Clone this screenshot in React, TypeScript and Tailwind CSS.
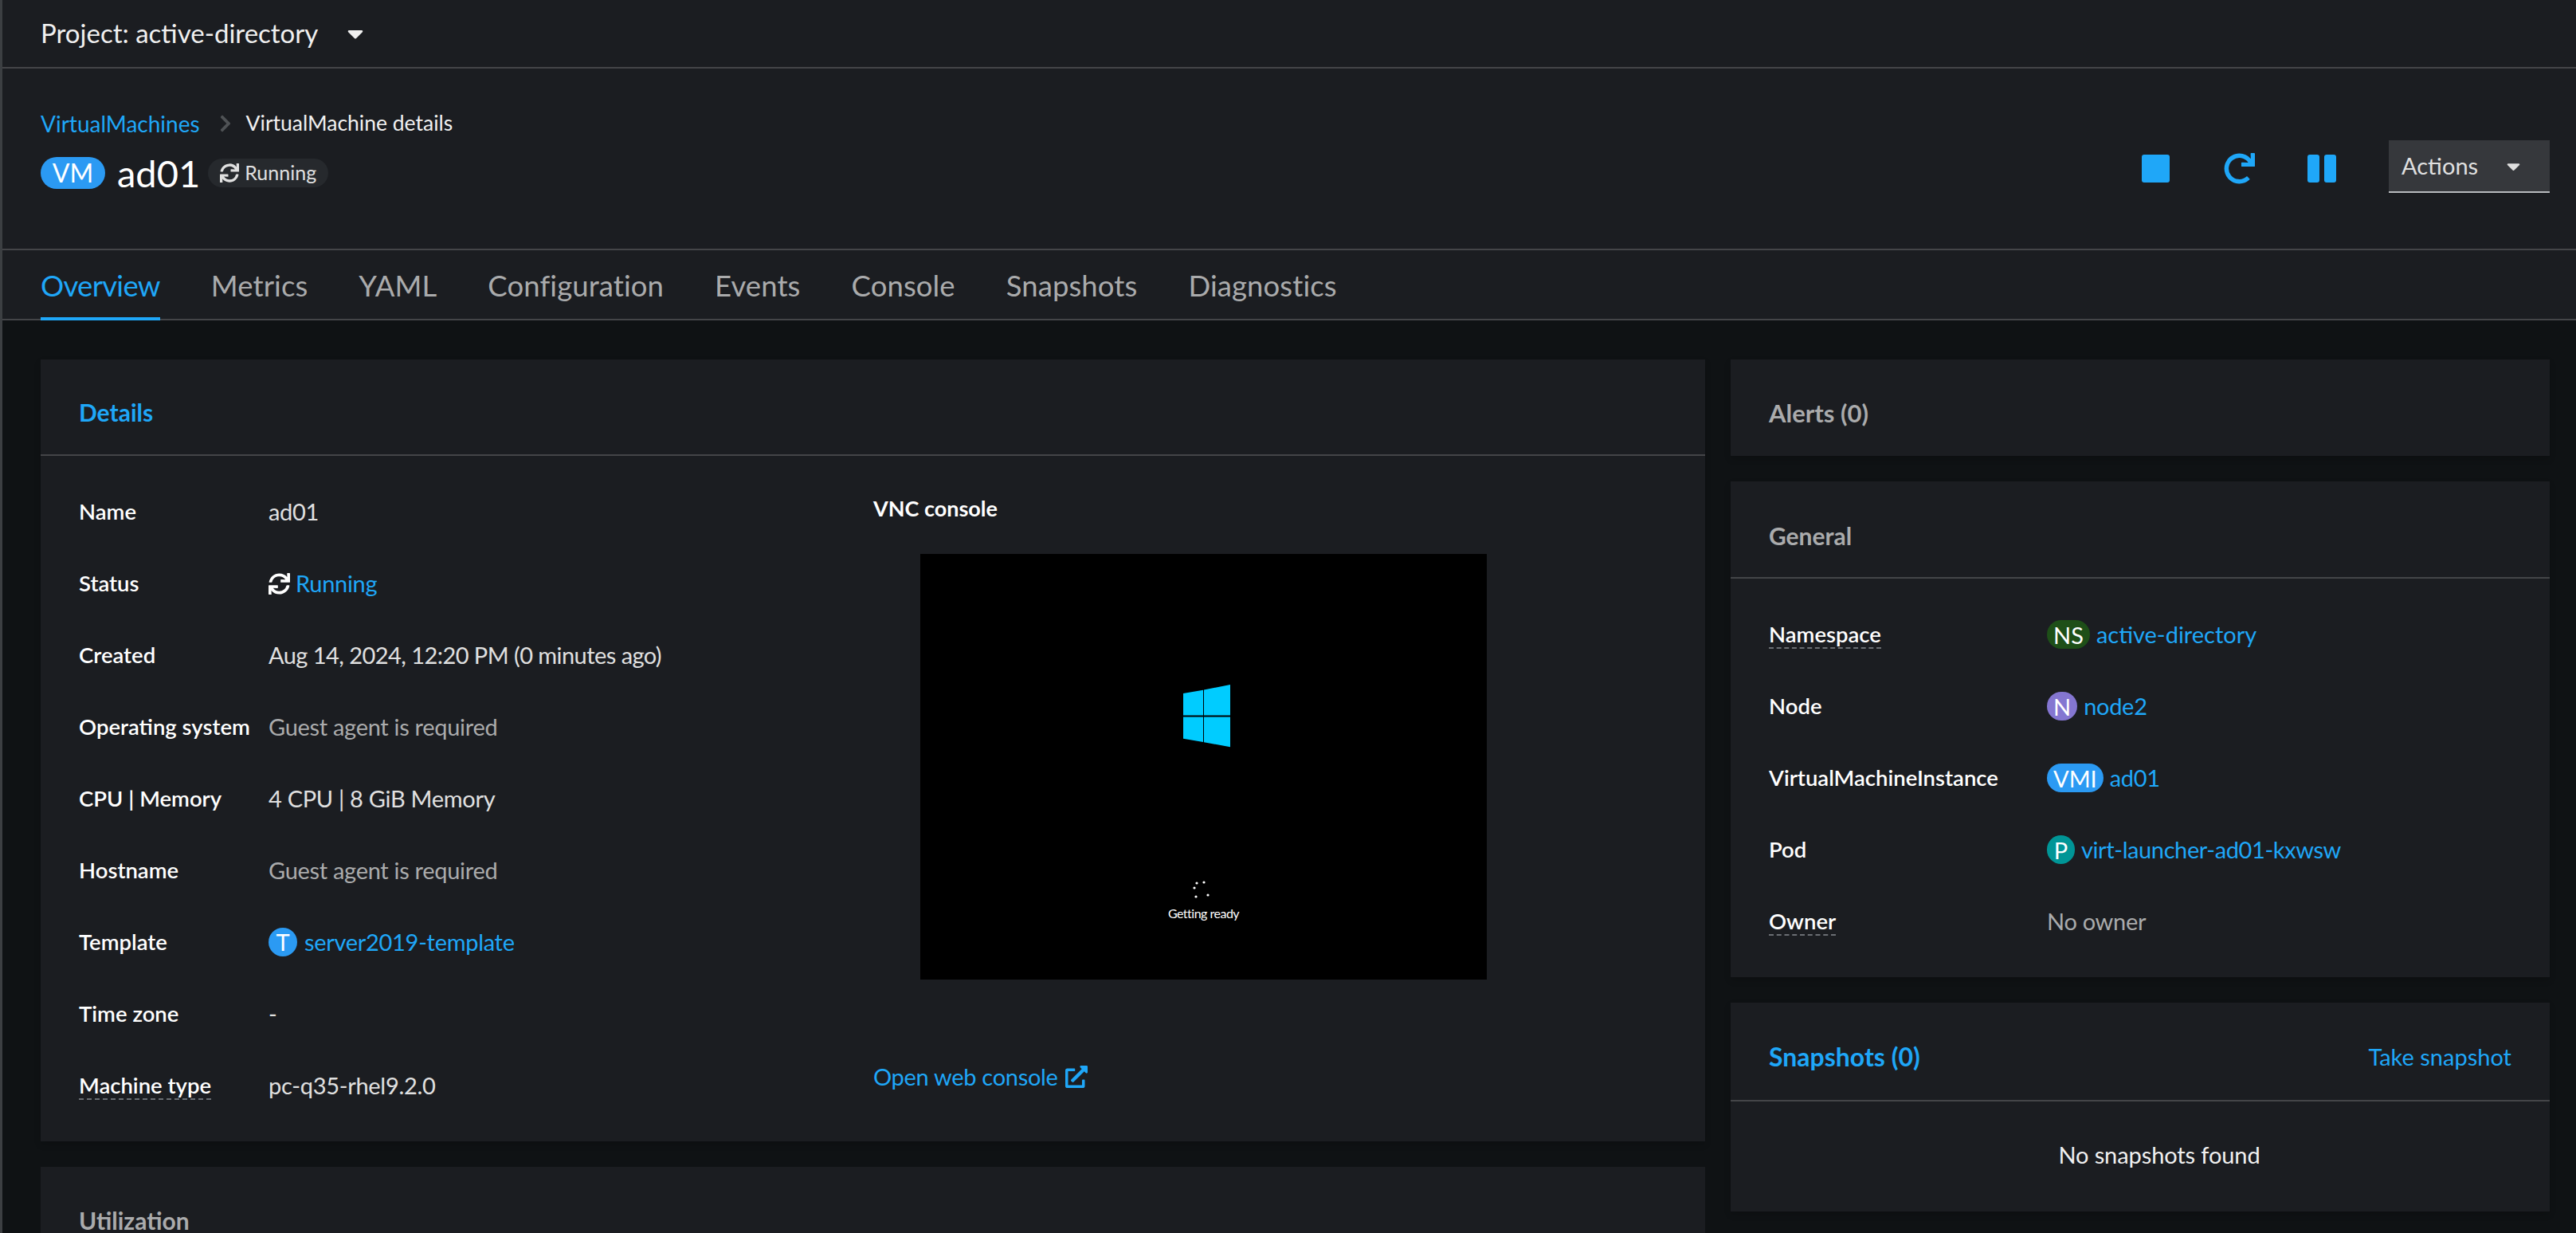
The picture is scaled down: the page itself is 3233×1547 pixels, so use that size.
import { FaSync, FaRedo, FaCaretDown, FaExternalLinkAlt, FaChevronRight } from "react-icons/fa";

const tabs = ["Overview", "Metrics", "YAML", "Configuration", "Events", "Console", "Snapshots", "Diagnostics"];

function Badge({ label, color }: { label: string; color: string }) {
  return (
    <span className={`${color} inline-flex h-[36px] items-center justify-center rounded-full px-[8px] text-[29px] leading-none tracking-normal text-white min-w-[35px]`}>
      {label}
    </span>
  );
}

function Label({ text, dashed }: { text: string; dashed?: boolean }) {
  return (
    <span className={`text-[27.5px] leading-[34px] font-semibold text-white ${dashed ? "border-b-2 border-dashed border-[#6a6e73]" : ""}`}>
      {text}
    </span>
  );
}

function DetailRow({ label, dashed, children }: { label: string; dashed?: boolean; children: React.ReactNode }) {
  return (
    <div className="flex h-[90px] items-center">
      <div className="w-[238px] shrink-0">
        <Label text={label} dashed={dashed} />
      </div>
      <div className="flex items-center text-[29px] tracking-[-0.3px] text-[#e0e0e0]">{children}</div>
    </div>
  );
}

function GeneralRow({ label, dashed, children }: { label: string; dashed?: boolean; children: React.ReactNode }) {
  return (
    <div className="flex h-[90px] items-center">
      <div className="w-[349px] shrink-0">
        <Label text={label} dashed={dashed} />
      </div>
      <div className="flex items-center gap-[8px] text-[29px] tracking-[-0.3px] text-[#1fa7f8]">{children}</div>
    </div>
  );
}

function WindowsLogo() {
  return (
    <svg width="59" height="79" viewBox="0 0 59 79" className="ml-[8px] fill-[#00ccff]">
      <polygon points="0,11 25,6.7 25,38.5 0,38.5" />
      <polygon points="26,6.5 59,0 59,38.5 26,38.5" />
      <polygon points="0,40.5 25,40.5 25,72 0,67.7" />
      <polygon points="26,40.5 59,40.5 59,78.3 26,72.2" />
    </svg>
  );
}

export default function App() {
  return (
    <div className="flex h-[1547px] w-[3233px] flex-col overflow-hidden border-l-[3px] border-[#3c3f42] bg-[#0f1214] font-['Lato',sans-serif] text-white">
      {/* project bar */}
      <div className="flex h-[86px] shrink-0 items-center border-b-2 border-[#444548] bg-[#1b1d21] pl-[48px]">
        <span className="text-[33px] text-[#f0f0f0]">Project: active-directory</span>
        <FaCaretDown className="ml-[31px] text-[#f0f0f0]" size={32} />
      </div>

      {/* header */}
      <div className="flex h-[228px] shrink-0 justify-between border-b-2 border-[#444548] bg-[#1b1d21] pl-[48px] pr-[33px]">
        <div className="pt-[51px]">
          <div className="flex h-[36px] items-center">
            <span className="text-[28px] text-[#1fa7f8]">VirtualMachines</span>
            <FaChevronRight className="ml-[20px] mr-[14px] text-[#4f5255]" size={24} />
            <span className="text-[26.5px] text-[#f0f0f0]">VirtualMachine details</span>
          </div>
          <div className="mt-[24px] flex items-center">
            <span className="flex h-[40px] w-[81px] items-center justify-center rounded-full bg-[#2b9af3] text-[32px] text-white">VM</span>
            <span className="ml-[15px] text-[47px] leading-[40px] text-white">ad01</span>
            <span className="ml-[10px] flex h-[36px] items-center gap-[7px] rounded-full bg-[#26292d] px-[15px] text-[25px] text-[#e0e0e0]">
              <FaSync size={24} />
              Running
            </span>
          </div>
        </div>
        <div className="flex items-start pt-[90px]">
          <span className="mt-[18px] h-[35px] w-[35px] rounded-[3px] bg-[#1fa7f8]" />
          <FaRedo className="ml-[68px] mt-[16px] text-[#1fa7f8]" size={39} />
          <span className="ml-[66px] mt-[18px] flex gap-[6px]">
            <span className="h-[35px] w-[15px] rounded-[3px] bg-[#1fa7f8]" />
            <span className="h-[35px] w-[15px] rounded-[3px] bg-[#1fa7f8]" />
          </span>
          <button className="ml-[66px] flex h-[66px] w-[202px] items-center justify-between border-b-2 border-[#b8bbbe] bg-[#36383c] pl-[16px] pr-[32px] text-[29px] text-[#e0e0e0]">
            Actions
            <FaCaretDown size={27} />
          </button>
        </div>
      </div>

      {/* tabs */}
      <div className="flex h-[88px] shrink-0 gap-[64px] border-b-2 border-[#444548] bg-[#1b1d21] pl-[48px]">
        {tabs.map((tab, i) => (
          <div
            key={tab}
            className={`-mb-[2px] flex items-center text-[36.5px] ${i === 0 ? "border-b-[4px] border-[#1fa7f8] pt-[4px] tracking-[-0.7px] text-[#1fa7f8]" : "tracking-[0.1px] text-[#aaabac]"}`}
          >
            {tab}
          </div>
        ))}
      </div>

      {/* content */}
      <div className="flex gap-[32px] pl-[48px] pt-[49px]">
        <div className="flex w-[2089px] shrink-0 flex-col gap-[32px]">
          <div className="h-[981px] bg-[#1b1d21] shadow-[0_4px_8px_rgba(3,3,3,0.16)]">
            <div className="flex h-[121px] items-center border-b-2 border-[#444548] pl-[48px] pt-[14px] text-[30px] font-bold text-[#1fa7f8]">Details</div>
            <div className="flex pl-[48px] pt-[25px]">
              <div className="w-[997px] shrink-0">
                <DetailRow label="Name">ad01</DetailRow>
                <DetailRow label="Status">
                  <FaSync className="mr-[7px] text-white" size={27} />
                  <span className="text-[#1fa7f8]">Running</span>
                </DetailRow>
                <DetailRow label="Created">
                  <span className="tracking-[-0.55px]">Aug 14, 2024, 12:20 PM (0 minutes ago)</span>
                </DetailRow>
                <DetailRow label="Operating system">
                  <span className="text-[#aaabac]">Guest agent is required</span>
                </DetailRow>
                <DetailRow label="CPU | Memory">4 CPU | 8 GiB Memory</DetailRow>
                <DetailRow label="Hostname">
                  <span className="text-[#aaabac]">Guest agent is required</span>
                </DetailRow>
                <DetailRow label="Template">
                  <span className="mr-[9px] flex h-[36px] w-[36px] items-center justify-center rounded-full bg-[#2b9af3] text-[29px] text-white">T</span>
                  <span className="text-[#1fa7f8]">server2019-template</span>
                </DetailRow>
                <DetailRow label="Time zone">-</DetailRow>
                <DetailRow label="Machine type" dashed>pc-q35-rhel9.2.0</DetailRow>
              </div>
              <div className="flex flex-col pt-[25px]">
                <div className="flex h-[32px] items-center text-[27px] font-bold text-white">VNC console</div>
                <div className="ml-[59px] mt-[41px] flex h-[534px] w-[711px] flex-col items-center bg-black pt-[164px]">
                  <WindowsLogo />
                  <svg width="24" height="24" viewBox="0 0 24 24" className="mt-[167px] -translate-x-[3px] fill-white">
                    <circle cx="6" cy="3" r="1.6" />
                    <circle cx="15" cy="2" r="1.6" />
                    <circle cx="3" cy="9" r="1.6" />
                    <circle cx="5" cy="20" r="1.6" />
                    <circle cx="20" cy="18" r="1.6" />
                  </svg>
                  <span className="mt-[5px] text-[16px] leading-[24px] tracking-[-0.5px] text-white">Getting ready</span>
                </div>
                <div className="mt-[100px] flex items-center text-[29px] tracking-[-0.3px] text-[#1fa7f8]">
                  Open web console
                  <FaExternalLinkAlt className="ml-[9px]" size={28} />
                </div>
              </div>
            </div>
          </div>
          <div className="h-[200px] bg-[#1b1d21] pl-[48px] pt-[54px] text-[30px] leading-[26px] font-bold text-[#aaabac]">Utilization</div>
        </div>

        <div className="flex w-[1028px] shrink-0 flex-col gap-[32px]">
          <div className="flex h-[121px] items-center bg-[#1b1d21] pl-[48px] pt-[14px] text-[31px] font-bold text-[#aaabac] shadow-[0_4px_8px_rgba(3,3,3,0.16)]">Alerts (0)</div>
          <div className="h-[622px] bg-[#1b1d21] shadow-[0_4px_8px_rgba(3,3,3,0.16)]">
            <div className="flex h-[122px] items-center border-b-2 border-[#444548] pl-[48px] pt-[16px] text-[30px] font-bold text-[#aaabac]">General</div>
            <div className="pl-[48px] pt-[25px]">
              <GeneralRow label="Namespace" dashed>
                <Badge label="NS" color="bg-[#1e4f18]" />
                <span className="tracking-normal">active-directory</span>
              </GeneralRow>
              <GeneralRow label="Node">
                <Badge label="N" color="bg-[#8476d1]" />
                node2
              </GeneralRow>
              <GeneralRow label="VirtualMachineInstance">
                <Badge label="VMI" color="bg-[#2b9af3]" />
                ad01
              </GeneralRow>
              <GeneralRow label="Pod">
                <Badge label="P" color="bg-[#009596]" />
                <span className="tracking-[-0.4px]">virt-launcher-ad01-kxwsw</span>
              </GeneralRow>
              <GeneralRow label="Owner" dashed>
                <span className="text-[#aaabac]">No owner</span>
              </GeneralRow>
            </div>
          </div>
          <div className="h-[262px] bg-[#1b1d21] shadow-[0_4px_8px_rgba(3,3,3,0.16)]">
            <div className="flex h-[124px] items-center justify-between border-b-2 border-[#444548] pl-[48px] pr-[48px] pt-[14px] text-[29px]">
              <span className="text-[32px] font-bold text-[#1fa7f8]">Snapshots (0)</span>
              <span className="text-[#1fa7f8]">Take snapshot</span>
            </div>
            <div className="flex h-[138px] items-center justify-center pb-[4px] pl-[48px] text-[29px] tracking-[-0.1px] text-[#f0f0f0]">No snapshots found</div>
          </div>
        </div>
      </div>
    </div>
  );
}
